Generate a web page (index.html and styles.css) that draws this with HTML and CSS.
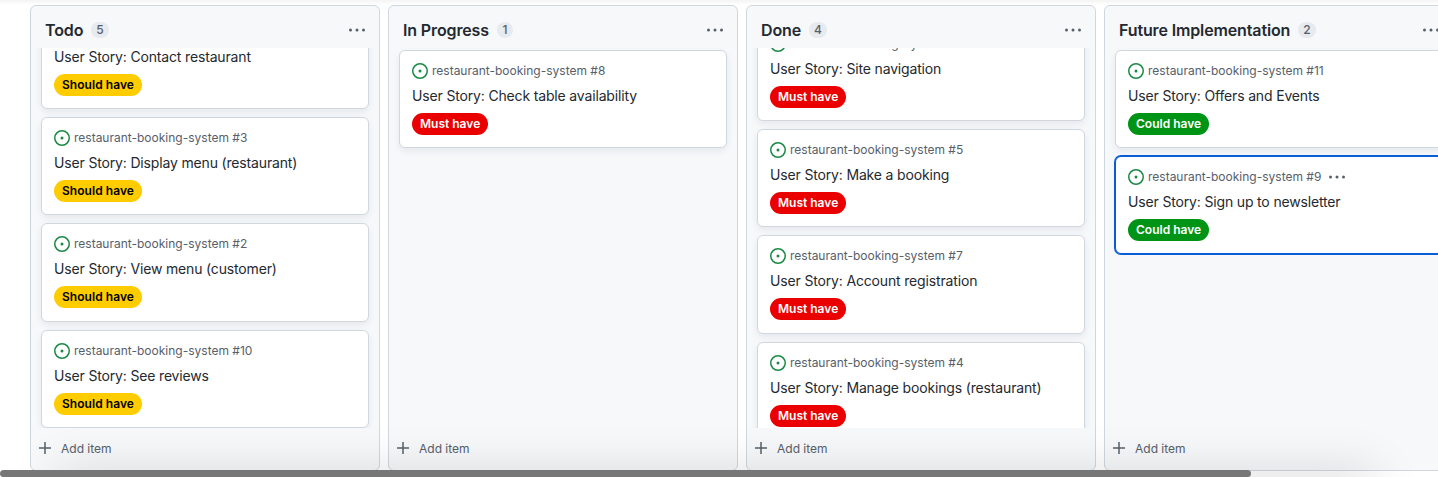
FILE: index.html
```html
<!DOCTYPE html>
<html lang="en">
<head>
<meta charset="utf-8">
<title>Project board</title>
<link rel="stylesheet" href="styles.css">
</head>
<body>
<svg width="0" height="0" class="defs">
  <symbol id="issue" viewBox="0 0 16 16"><path d="M8 9.5a1.5 1.5 0 1 0 0-3 1.5 1.5 0 0 0 0 3Z"/><path d="M8 0a8 8 0 1 1 0 16A8 8 0 0 1 8 0ZM1.5 8a6.5 6.5 0 1 0 13 0 6.5 6.5 0 0 0-13 0Z"/></symbol>
  <symbol id="dots" viewBox="0 0 18 4"><circle cx="2.5" cy="2" r="1.5"/><circle cx="9" cy="2" r="1.5"/><circle cx="15.5" cy="2" r="1.5"/></symbol>
  <symbol id="plus" viewBox="0 0 12 12"><path d="M5.25 0h1.5v5.25H12v1.5H6.75V12h-1.5V6.75H0v-1.5h5.25Z"/></symbol>
</svg>
<main class="board">
  <section class="column">
    <header class="head"><h2>Todo</h2><span class="count">5</span><svg class="dots"><use href="#dots"/></svg></header>
    <div class="body">
      <div class="list scrolled-todo">
        <article class="card"><div class="repo"></div><h3>User Story: Contact restaurant</h3><span class="label should">Should have</span></article>
        <article class="card"><div class="repo"><svg class="issue"><use href="#issue"/></svg><span>restaurant-booking-system #3</span></div><h3>User Story: Display menu (restaurant)</h3><span class="label should">Should have</span></article>
        <article class="card"><div class="repo"><svg class="issue"><use href="#issue"/></svg><span>restaurant-booking-system #2</span></div><h3>User Story: View menu (customer)</h3><span class="label should">Should have</span></article>
        <article class="card"><div class="repo"><svg class="issue"><use href="#issue"/></svg><span>restaurant-booking-system #10</span></div><h3>User Story: See reviews</h3><span class="label should">Should have</span></article>
      </div>
    </div>
    <footer class="add"><svg class="plus"><use href="#plus"/></svg><span>Add item</span></footer>
  </section>
  <section class="column">
    <header class="head"><h2>In Progress</h2><span class="count">1</span><svg class="dots"><use href="#dots"/></svg></header>
    <div class="body">
      <div class="list">
        <article class="card"><div class="repo"><svg class="issue"><use href="#issue"/></svg><span>restaurant-booking-system #8</span></div><h3>User Story: Check table availability</h3><span class="label must">Must have</span></article>
      </div>
    </div>
    <footer class="add"><svg class="plus"><use href="#plus"/></svg><span>Add item</span></footer>
  </section>
  <section class="column">
    <header class="head"><h2>Done</h2><span class="count">4</span><svg class="dots"><use href="#dots"/></svg></header>
    <div class="body">
      <div class="list scrolled-done">
        <article class="card"><div class="repo"><svg class="issue"><use href="#issue"/></svg><span>restaurant-booking-system #6</span></div><h3>User Story: Site navigation</h3><span class="label must">Must have</span></article>
        <article class="card"><div class="repo"><svg class="issue"><use href="#issue"/></svg><span>restaurant-booking-system #5</span></div><h3>User Story: Make a booking</h3><span class="label must">Must have</span></article>
        <article class="card"><div class="repo"><svg class="issue"><use href="#issue"/></svg><span>restaurant-booking-system #7</span></div><h3>User Story: Account registration</h3><span class="label must">Must have</span></article>
        <article class="card"><div class="repo"><svg class="issue"><use href="#issue"/></svg><span>restaurant-booking-system #4</span></div><h3>User Story: Manage bookings (restaurant)</h3><span class="label must">Must have</span></article>
      </div>
    </div>
    <footer class="add"><svg class="plus"><use href="#plus"/></svg><span>Add item</span></footer>
  </section>
  <section class="column">
    <header class="head"><h2>Future Implementation</h2><span class="count">2</span><svg class="dots"><use href="#dots"/></svg></header>
    <div class="body">
      <div class="list">
        <article class="card"><div class="repo"><svg class="issue"><use href="#issue"/></svg><span>restaurant-booking-system #11</span></div><h3>User Story: Offers and Events</h3><span class="label could">Could have</span></article>
        <article class="card selected"><div class="repo"><svg class="issue"><use href="#issue"/></svg><span>restaurant-booking-system #9</span><svg class="dots"><use href="#dots"/></svg></div><h3>User Story: Sign up to newsletter</h3><span class="label could">Could have</span></article>
      </div>
    </div>
    <footer class="add"><svg class="plus"><use href="#plus"/></svg><span>Add item</span></footer>
  </section>
</main>
<div class="top-shade"></div>
<div class="bottom-shade"></div>
<div class="scrollbar"></div>
</body>
</html>
```
FILE: styles.css
```css
* { box-sizing: border-box; }
html { overflow: hidden; }
body {
  margin: 0;
  height: 477px;
  overflow: hidden;
  background: #fff;
  color: #24292f;
  font-family: Inter, "Liberation Sans", sans-serif;
  position: relative;
}
.defs { position: absolute; }
svg { fill: #57606a; flex: none; display: block; }
h2, h3 { margin: 0; white-space: nowrap; }
.board { display: flex; gap: 8px; padding: 5px 0 0 30px; width: 1500px; }
.column {
  width: 350px;
  height: 466px;
  flex: none;
  display: flex;
  flex-direction: column;
  background: #f6f8fa;
  border: 1px solid #d0d7de;
  border-radius: 6px;
}
.head { display: flex; align-items: center; height: 42px; padding: 5px 13px 0 14px; }
.head h2 { font-size: 16px; line-height: 24px; font-weight: 600; letter-spacing: -0.13px; }
.count {
  margin-left: 8px;
  min-width: 16px;
  height: 16px;
  padding: 0 5px;
  border-radius: 8px;
  background: #e7eaee;
  color: #57606a;
  font-size: 12px;
  line-height: 16px;
  font-weight: 500;
  text-align: center;
}
.dots { width: 18px; height: 4px; }
.head .dots { margin-left: auto; }
.body { height: 380px; overflow: hidden; padding: 2px 10px 0; }
.list { display: flex; flex-direction: column; gap: 8px; }
.scrolled-todo { margin-top: -39.3px; }
.scrolled-done { margin-top: -27.3px; }
.card {
  height: 98.33px;
  flex: none;
  padding: 12px;
  background: #fff;
  border: 1px solid #d0d7de;
  border-radius: 6px;
  box-shadow: 0 3px 6px rgba(140, 149, 159, 0.15);
}
.selected { height: 97.6px; border-color: #0b5cd7; box-shadow: 0 0 0 1px #0b5cd7; }
.repo { display: flex; align-items: center; height: 16px; color: #57606a; font-size: 12px; line-height: 16px; white-space: nowrap; }
.repo span { margin-left: 4px; }
.repo .dots { margin-left: 7px; }
.issue { width: 16px; height: 16px; fill: #1a8a45; }
.card h3 { margin-top: 7px; font-size: 14px; line-height: 20px; font-weight: 400; letter-spacing: -0.16px; }
.label {
  display: block;
  width: fit-content;
  height: 22px;
  margin-top: 7px;
  padding: 0 8px;
  border-radius: 11px;
  font-size: 12px;
  line-height: 22px;
  font-weight: 600;
  white-space: nowrap;
}
.should { background: #fc0; color: #000; letter-spacing: 0.05px; }
.must { background: #eb0000; color: #fff; }
.could { background: #009416; color: #fff; }
.add { display: flex; align-items: center; height: 40px; padding-left: 8px; color: #57606a; font-size: 12px; }
.plus { width: 12px; height: 12px; }
.add span { margin-left: 10px; }
.top-shade { position: absolute; inset: 0 0 auto 0; height: 5px; background: linear-gradient(#f4f4f4, rgba(255, 255, 255, 0)); }
.bottom-shade { position: absolute; left: 60px; top: 477px; width: 1310px; height: 30px; box-shadow: 0 0 50px 4px rgba(0, 0, 0, 0.15); }
.scrollbar { position: absolute; left: 0; top: 470px; width: 1251px; height: 7px; border-radius: 4px; background: #777; }
```
